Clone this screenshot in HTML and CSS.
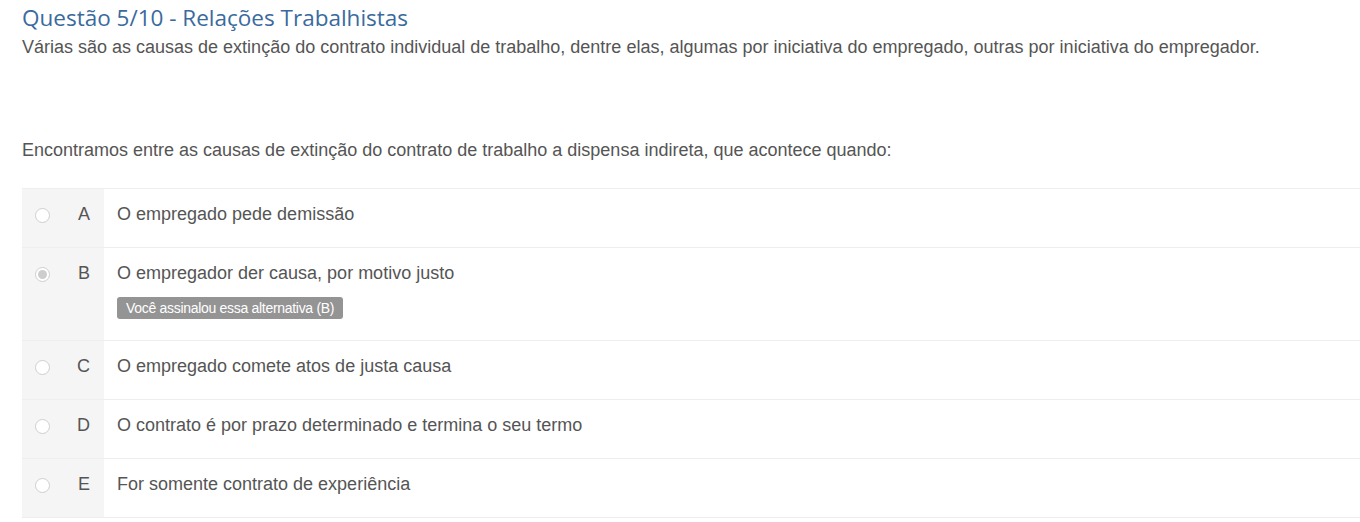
FILE: index.html
```html
<!DOCTYPE html>
<html lang="pt-BR">
<head>
  <meta charset="UTF-8" />
  <title>Questão 5/10</title>
  <link rel="stylesheet" href="styles.css">
</head>
<body>
  <div class="page">
    <h1 class="q-title">Questão 5/10 - Relações Trabalhistas</h1>
    <p class="q-intro">Várias são as causas de extinção do contrato individual de trabalho, dentre elas, algumas por iniciativa do empregado, outras por iniciativa do empregador.</p>

    <p class="q-text">Encontramos entre as causas de extinção do contrato de trabalho a dispensa indireta, que acontece quando:</p>

    <ul class="options">
      <li class="option">
        <div class="opt-side">
          <span class="radio"></span>
          <span class="letter">A</span>
        </div>
        <div class="opt-body">O empregado pede demissão</div>
      </li>
      <li class="option">
        <div class="opt-side">
          <span class="radio checked"></span>
          <span class="letter">B</span>
        </div>
        <div class="opt-body">
          O empregador der causa, por motivo justo
          <div><span class="badge">Você assinalou essa alternativa (B)</span></div>
        </div>
      </li>
      <li class="option">
        <div class="opt-side">
          <span class="radio"></span>
          <span class="letter">C</span>
        </div>
        <div class="opt-body">O empregado comete atos de justa causa</div>
      </li>
      <li class="option">
        <div class="opt-side">
          <span class="radio"></span>
          <span class="letter">D</span>
        </div>
        <div class="opt-body">O contrato é por prazo determinado e termina o seu termo</div>
      </li>
      <li class="option">
        <div class="opt-side">
          <span class="radio"></span>
          <span class="letter">E</span>
        </div>
        <div class="opt-body">For somente contrato de experiência</div>
      </li>
    </ul>
  </div>
</body>
</html>
```

FILE: styles.css
```css
html, body {
  margin: 0;
  padding: 0;
  background: #fff;
}

body {
  font-family: "Liberation Sans", Arial, sans-serif;
  font-size: 18px;
  line-height: 24px;
  color: #555;
}

.page {
  padding: 2px 0 0 22px;
}

.q-title {
  margin: 0;
  font-family: "Open Sans", sans-serif;
  font-weight: normal;
  font-size: 22.5px;
  line-height: 32px;
  color: #3a6a9e;
}

.q-intro {
  margin: 1px 0 0;
}

.q-text {
  margin: 79px 0 0;
}

.options {
  list-style: none;
  margin: 26px 0 0;
  padding: 0;
  border-bottom: 1px solid #eee;
}

.option {
  display: flex;
  border-top: 1px solid #eee;
}

.opt-side {
  display: flex;
  align-items: flex-start;
  width: 82px;
  flex-shrink: 0;
  padding-top: 13px;
  background: #f5f5f5;
}

.radio {
  width: 13px;
  height: 13px;
  margin: 6px 0 0 13px;
  border: 1px solid #cfcfcf;
  border-radius: 50%;
  background: #fff;
  position: relative;
}

.radio.checked::after {
  content: "";
  position: absolute;
  left: 2px;
  top: 2px;
  width: 9px;
  height: 9px;
  border-radius: 50%;
  background: #cdcdcd;
}

.letter {
  flex: 1;
  padding-right: 14px;
  text-align: right;
}

.opt-body {
  flex: 1;
  padding: 13px 0 21px 13px;
}

.badge {
  display: inline-block;
  margin-top: 12px;
  padding: 0 9px;
  height: 22px;
  line-height: 22px;
  font-size: 14px;
  color: #fff;
  background: #949494;
  border-radius: 3px;
  letter-spacing: -0.3px;
}
```
